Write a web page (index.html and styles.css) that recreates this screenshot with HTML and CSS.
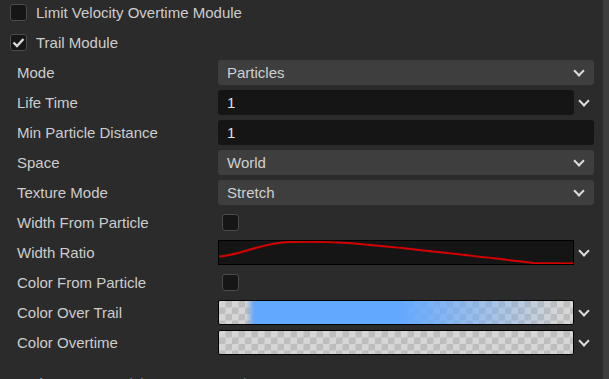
FILE: index.html
```html
<!DOCTYPE html>
<html lang="en">
<head>
  <meta charset="UTF-8">
  <title>Trail Module</title>
  <link rel="stylesheet" href="styles.css">
</head>
<body>
  <div class="inspector">
    <div class="panel">
      <div class="module-row">
        <span class="checkbox"></span>
        <span class="module-name">Limit Velocity Overtime Module</span>
      </div>
      <div class="module-row">
        <span class="checkbox checked">
          <svg width="13" height="11" viewBox="0 0 13 11"><path d="M1.5 5.5 L5 9 L11.5 2" fill="none" stroke="#d8d8d8" stroke-width="2.4"/></svg>
        </span>
        <span class="module-name">Trail Module</span>
      </div>

      <div class="prop-row">
        <label>Mode</label>
        <div class="select">Particles <span class="chevron"></span></div>
      </div>
      <div class="prop-row">
        <label>Life Time</label>
        <div class="with-menu">
          <div class="input">1</div>
          <span class="chevron"></span>
        </div>
      </div>
      <div class="prop-row">
        <label>Min Particle Distance</label>
        <div class="input">1</div>
      </div>
      <div class="prop-row">
        <label>Space</label>
        <div class="select">World <span class="chevron"></span></div>
      </div>
      <div class="prop-row">
        <label>Texture Mode</label>
        <div class="select">Stretch <span class="chevron"></span></div>
      </div>
      <div class="prop-row">
        <label>Width From Particle</label>
        <div><span class="checkbox small"></span></div>
      </div>
      <div class="prop-row">
        <label>Width Ratio</label>
        <div class="with-menu">
          <div class="curve">
            <svg width="100%" height="23" viewBox="0 0 354 23" preserveAspectRatio="none">
              <path d="M0 15.5 C18 15, 42 2, 70 1 C90 0.5, 110 1, 130 2 C200 8, 270 17, 315 22 L354 22.5" fill="none" stroke="#d40000" stroke-width="2"/>
            </svg>
          </div>
          <span class="chevron"></span>
        </div>
      </div>
      <div class="prop-row">
        <label>Color From Particle</label>
        <div><span class="checkbox small"></span></div>
      </div>
      <div class="prop-row">
        <label>Color Over Trail</label>
        <div class="with-menu">
          <div class="gradient trail"></div>
          <span class="chevron"></span>
        </div>
      </div>
      <div class="prop-row">
        <label>Color Overtime</label>
        <div class="with-menu">
          <div class="gradient"></div>
          <span class="chevron"></span>
        </div>
      </div>

      <div class="section-row">
        <span class="section-name">Renderer</span>
        <span class="section-type">Particle System Renderer</span>
      </div>
    </div>
    <div class="scrollbar"></div>
  </div>
</body>
</html>
```

FILE: styles.css
```css
html, body {
  margin: 0;
  height: 100%;
  overflow: hidden;
}
body {
  font-family: 'Liberation Sans', Arial, sans-serif;
  font-size: 15px;
  color: #cdcdcd;
  background-color: #2b2b2b;
}
.inspector {
  display: flex;
  height: 100%;
}
.panel {
  flex: 1;
  margin-top: -3px;
  padding: 0 9px 0 10px;
}
.scrollbar {
  width: 6px;
  background-color: #3c3c3c;
}
.module-row {
  display: flex;
  align-items: center;
  gap: 9px;
  height: 30px;
}
.checkbox {
  display: flex;
  align-items: center;
  justify-content: center;
  box-sizing: border-box;
  width: 17px;
  height: 17px;
  background-color: #161616;
  border: 1px solid #4b4b4b;
  border-radius: 3px;
}
.module-row .checkbox {
  margin-top: 1px;
}
.checkbox.small {
  margin-left: 4px;
}
.prop-row {
  display: grid;
  grid-template-columns: 201px 1fr;
  align-items: center;
  height: 30px;
  padding-left: 7px;
}
.prop-row > div {
  margin-top: 1px;
}
.prop-row label {
  white-space: nowrap;
}
.select, .input {
  display: flex;
  align-items: center;
  justify-content: space-between;
  box-sizing: border-box;
  height: 25px;
  padding: 0 9px;
  border-radius: 3px;
}
.select {
  background-color: #3e3e3e;
  color: #d0d0d0;
  padding-right: 11px;
}
.input {
  background-color: #151515;
  color: #e0e0e0;
}
.with-menu {
  display: flex;
  align-items: center;
}
.with-menu > div {
  flex: 1;
}
.with-menu > .chevron {
  margin: -3px 6px 0 6px;
}
.chevron {
  display: inline-block;
  width: 6px;
  height: 6px;
  margin-top: -4px;
  border-right: 2px solid #dcdcdc;
  border-bottom: 2px solid #dcdcdc;
  transform: rotate(45deg);
  flex: none;
}
.curve {
  box-sizing: border-box;
  height: 25px;
  background-color: #151515;
  border: 1px solid #000;
}
.curve svg {
  display: block;
}
.gradient {
  box-sizing: border-box;
  height: 25px;
  border: 1px solid #000;
  border-radius: 2px;
  background-color: #d6d6d6;
  background-image:
    linear-gradient(45deg, #bdbdbd 25%, transparent 25%, transparent 75%, #bdbdbd 75%),
    linear-gradient(45deg, #bdbdbd 25%, transparent 25%, transparent 75%, #bdbdbd 75%);
  background-size: 13px 13px;
  background-position: 0 0, 6.5px 6.5px;
}
.gradient.trail {
  background-image:
    linear-gradient(to right, rgba(98, 168, 255, 0) 7.5%, #62a8ff 10%, #62a8ff 50%, rgba(98, 168, 255, 0.6) 68%, rgba(98, 168, 255, 0.25) 85%, rgba(98, 168, 255, 0) 96%),
    linear-gradient(45deg, #bdbdbd 25%, transparent 25%, transparent 75%, #bdbdbd 75%),
    linear-gradient(45deg, #bdbdbd 25%, transparent 25%, transparent 75%, #bdbdbd 75%);
  background-size: 100% 100%, 13px 13px, 13px 13px;
  background-position: 0 0, 0 0, 6.5px 6.5px;
}
.section-row {
  display: flex;
  align-items: center;
  height: 30px;
  margin-top: 11px;
  margin-left: -3px;
}
.section-name {
  width: 95px;
  color: #bbbbbb;
}
.section-type {
  color: #808080;
}
```
